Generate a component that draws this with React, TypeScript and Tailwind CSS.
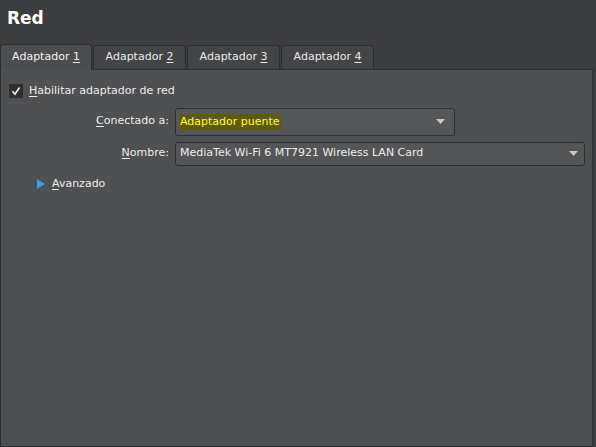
import React from "react";

const font = { fontFamily: '"DejaVu Sans", Verdana, sans-serif' };

function Tab({ n, active }: { n: number; active?: boolean }) {
  return (
    <div
      className={
        active
          ? "relative z-10 -mb-px flex h-[26px] w-[92px] items-center justify-center rounded-t-[3px] border border-b-0 border-[#2c2d2e] bg-[#4c4d4f] text-[#f0f0f0]"
          : "mt-[2px] flex h-[24px] w-[93px] items-center justify-center rounded-t-[3px] border border-b-0 border-[#2c2d2e] bg-[#434446] text-[#e8e8e8]"
      }
    >
      <span>
        Adaptador <span className="underline underline-offset-2">{n}</span>
      </span>
    </div>
  );
}

function Arrow() {
  return (
    <svg width="9" height="5" viewBox="0 0 9 5">
      <path d="M0 0 H9 L4.5 5 Z" fill="#c8c8c8" />
    </svg>
  );
}

export default function App() {
  return (
    <div className="flex h-[447px] w-[596px] flex-col bg-[#3c3d3f] text-[11px] text-[#ececec]" style={font}>
      <div className="flex h-[43px] items-start px-[7px] pt-[6px]">
        <span className="text-[17px] font-bold text-white" style={{ fontFamily: '"DejaVu Sans", sans-serif' }}>
          Red
        </span>
      </div>
      <div className="flex items-end gap-[1px] pl-0">
        <Tab n={1} active />
        <Tab n={2} />
        <Tab n={3} />
        <Tab n={4} />
      </div>
      <div className="mr-[3px] flex flex-1 flex-col border border-[#2c2d2e] bg-[#4f5052]">
        <div className="flex items-center gap-[6px] pl-[8px] pt-[13px]">
          <div className="flex h-[14px] w-[14px] items-center justify-center bg-[#2e2f30]">
            <svg width="10" height="10" viewBox="0 0 10 10">
              <path d="M1.5 5.2 L4 8.2 L8.5 1.5" stroke="#f2f2f2" strokeWidth="1.6" fill="none" />
            </svg>
          </div>
          <span>
            <span className="underline underline-offset-2">H</span>abilitar adaptador de red
          </span>
        </div>
        <div className="mt-[8px] flex items-center">
          <div className="w-[168px] text-right">
            <span className="underline underline-offset-2">C</span>onectado a:
          </div>
          <div className="ml-[6px] flex h-[28px] w-[280px] items-center justify-between rounded-[3px] border border-[#2e2f30] bg-[#565759] pl-[3px] pr-[9px]">
            <span className="bg-[#5e5a12] px-[1px] leading-[16px] text-[#ffff33]">Adaptador puente</span>
            <Arrow />
          </div>
        </div>
        <div className="mt-[6px] flex items-center">
          <div className="w-[168px] text-right">
            <span className="underline underline-offset-2">N</span>ombre:
          </div>
          <div className="ml-[6px] flex h-[24px] w-[410px] items-center justify-between rounded-[3px] border border-[#2e2f30] bg-[#545557] pl-[4px] pr-[6px]">
            <span>MediaTek Wi-Fi 6 MT7921 Wireless LAN Card</span>
            <Arrow />
          </div>
        </div>
        <div className="mt-[10px] flex items-center gap-[7px] pl-[36px]">
          <svg width="8" height="10" viewBox="0 0 8 10">
            <path d="M0 0 L8 5 L0 10 Z" fill="#3d9cf0" />
          </svg>
          <span>
            <span className="underline underline-offset-2">A</span>vanzado
          </span>
        </div>
      </div>
    </div>
  );
}
